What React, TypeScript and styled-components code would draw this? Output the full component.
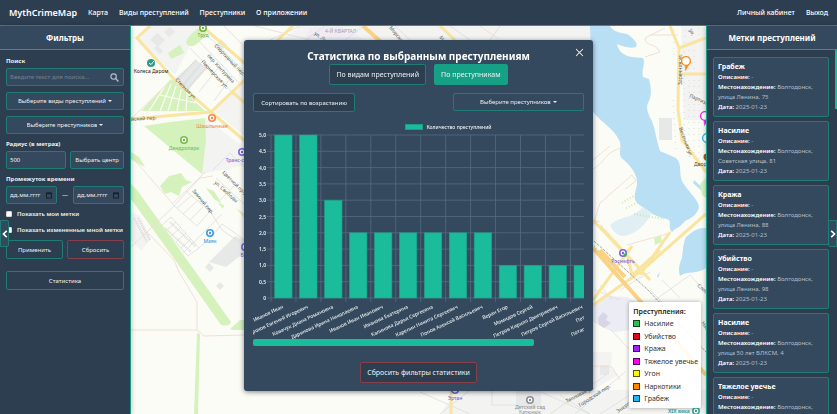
import React from "react";
import styled, { createGlobalStyle, css } from "styled-components";

const color = {
  dark: "#2c3e50",
  panel: "#34495e",
  line: "#1f7d76",
  teal: "#1abc9c",
  tealDeep: "#16a085",
  red: "#874049",
  text: "#ecf0f1",
  muted: "#b4bfc8",
};

const GlobalStyle = createGlobalStyle`
  * { box-sizing: border-box; }
  html, body, #root { height: 100%; margin: 0; }
  body {
    font-family: "Noto Sans", "Open Sans", sans-serif;
    font-size: 6px;
    color: ${color.text};
    background: ${color.dark};
    overflow: hidden;
  }
  button, input, select { font: inherit; color: inherit; margin: 0; }
`;

const Page = styled.div`
  height: 100vh;
  display: grid;
  grid-template-rows: 26px minmax(0, 1fr);
`;

const NavBar = styled.nav`
  display: flex;
  align-items: center;
  gap: 11px;
  padding: 0 9px;
  background: ${color.dark};
  border-bottom: 1px solid ${color.tealDeep};
`;

const Brand = styled.a`
  font-size: 9px;
  font-weight: 600;
  color: #fff;
  text-decoration: none;
`;

const NavLink = styled.a<{ $push?: boolean }>`
  font-size: 7px;
  font-weight: 500;
  color: #fff;
  text-decoration: none;
  white-space: nowrap;
  margin-left: ${(p) => (p.$push ? "auto" : "0")};
`;

const Main = styled.main`
  position: relative;
  display: grid;
  grid-template-columns: 131px minmax(0, 1fr) 131px;
  min-height: 0;
`;

const Panel = styled.aside<{ $side: "left" | "right" }>`
  position: relative;
  z-index: 1;
  min-height: 0;
  display: flex;
  flex-direction: column;
  background: ${color.dark};
  box-shadow: 0 0 5px rgba(0, 0, 0, 0.3);
  border: 0 solid ${color.tealDeep};
  ${(p) => (p.$side === "left" ? "border-right-width: 1px;" : "border-left-width: 1px;")}
`;

const PanelTitle = styled.h2`
  flex: none;
  margin: 0;
  height: 24px;
  display: flex;
  align-items: center;
  justify-content: center;
  font-size: 8px;
  font-weight: 700;
  color: #fff;
  background: ${color.panel};
  border-bottom: 1px solid ${color.tealDeep};
`;

const PanelToggle = styled.button<{ $side: "left" | "right" }>`
  position: absolute;
  top: 194px;
  ${(p) => p.$side}: 0;
  width: 9px;
  height: 27px;
  padding: 0;
  display: grid;
  place-items: center;
  background: ${color.panel};
  border: 1px solid ${color.line};
  border-radius: ${(p) => (p.$side === "left" ? "0 2px 2px 0" : "2px 0 0 2px")};
`;

const FilterForm = styled.form`
  padding: 7px 6px;
  display: flex;
  flex-direction: column;
`;

const Field = styled.div<{ $tight?: boolean }>`
  display: flex;
  flex-direction: column;
  margin-bottom: ${(p) => (p.$tight ? "2px" : "6px")};
`;

const FieldLabel = styled.label`
  font-weight: 700;
  line-height: 8px;
  margin-bottom: 3px;
`;

const FieldRow = styled.div<{ $gap: number }>`
  display: flex;
  align-items: center;
  gap: ${(p) => p.$gap}px;
`;

const InputBox = styled.div`
  flex: 1 1 auto;
  min-width: 0;
  height: 18px;
  display: flex;
  align-items: center;
  padding: 0 4px 0 3px;
  background: ${color.panel};
  border: 1px solid ${color.line};
  border-radius: 2px;
`;

const TextInput = styled.input<{ $strong?: boolean }>`
  flex: 1 1 0;
  min-width: 0;
  width: 100%;
  padding: 0;
  border: 0;
  outline: 0;
  background: transparent;
  &::placeholder {
    color: ${(p) => (p.$strong ? color.text : "#74808c")};
    opacity: 1;
  }
`;

const outlined = css`
  display: flex;
  align-items: center;
  justify-content: center;
  white-space: nowrap;
  border-radius: 2px;
`;

const Button = styled.button<{
  $tone?: "plain" | "panel" | "danger" | "active";
  $size?: "small" | "large";
  $grow?: boolean;
}>`
  ${outlined}
  ${(p) => (p.$grow ? "flex: 1 1 0; min-width: 0;" : "flex: none;")}
  height: ${(p) => (p.$size === "large" ? "21px" : p.$size === "small" ? "18px" : "19px")};
  padding: 0 ${(p) => (p.$size === "large" ? "6px" : p.$size === "small" ? "4px" : "7px")};
  font-size: ${(p) => (p.$size === "large" ? "7px" : "6px")};
  background: ${(p) =>
    p.$tone === "active" ? color.tealDeep : p.$tone === "panel" ? color.panel : color.dark};
  border: 1px solid
    ${(p) => (p.$tone === "danger" ? color.red : p.$tone === "active" ? color.tealDeep : color.line)};
`;

const SelectBox = styled.label<{ $wide?: boolean }>`
  ${outlined}
  height: 18px;
  gap: 2px;
  ${(p) => (p.$wide ? "width: 131px;" : "margin-bottom: 6px;")}
  background: ${color.panel};
  border: 1px solid ${color.line};
`;

const PlainSelect = styled.select`
  appearance: none;
  field-sizing: content;
  padding: 0;
  border: 0;
  outline: 0;
  background: transparent;
`;

const Caret = styled.span`
  border: 2px solid transparent;
  border-top-color: ${color.text};
  border-bottom-width: 0;
`;

const CheckRow = styled.label`
  display: flex;
  align-items: center;
  gap: 5px;
  height: 16px;
  font-weight: 600;
  white-space: nowrap;
`;

const CheckBox = styled.input`
  appearance: none;
  flex: none;
  width: 6px;
  height: 6px;
  background: #fff;
  border: 1px solid #d6d9dc;
  border-radius: 1px;
  &:checked { background: ${color.teal}; }
`;

const Actions = styled.div<{ $top: number }>`
  display: flex;
  gap: 4px;
  margin-top: ${(p) => p.$top}px;
`;

const CardScroller = styled.div`
  flex: 1 1 0;
  min-height: 0;
  overflow: hidden;
  display: flex;
  align-items: flex-start;
`;

const CardList = styled.ul`
  flex: 1;
  min-width: 0;
  margin: 0;
  padding: 7px 6px;
  list-style: none;
  display: grid;
  gap: 4px;
`;

const VerticalThumb = styled.div`
  width: 2px;
  height: 59px;
  background: ${color.teal};
`;

const Card = styled.li`
  padding: 4px;
  background: ${color.panel};
  border: 1px solid ${color.line};
  border-radius: 2px;
`;

const CardTitle = styled.h3`
  margin: 0;
  font-size: 7px;
  line-height: 10px;
  font-weight: 700;
  color: #fff;
`;

const CardText = styled.p`
  margin: 0;
  line-height: 10px;
  color: ${color.muted};
  b { color: #fff; font-weight: 600; }
`;

const MapArea = styled.section`
  position: relative;
  overflow: hidden;
  background: #fcfcf7;
`;

const MapDrawing = styled.svg`
  position: absolute;
  inset: 0;
  width: 100%;
  height: 100%;
`;

const Legend = styled.div`
  position: absolute;
  right: 5px;
  bottom: 6px;
  min-height: 106px;
  padding: 5px 3px 5px 4px;
  display: flex;
  flex-direction: column;
  justify-content: space-between;
  font-size: 7px;
  line-height: 9px;
  color: #333;
  background: rgba(255, 255, 255, 0.9);
  border-radius: 2px;
  box-shadow: 0 0 4px rgba(0, 0, 0, 0.35);
`;

const LegendTitle = styled.strong`
  color: #222;
  font-weight: 600;
`;

const LegendItem = styled.div`
  display: flex;
  align-items: center;
  gap: 4px;
  white-space: nowrap;
`;

const Swatch = styled.span<{ $fill: string }>`
  width: 7px;
  height: 7px;
  background: ${(p) => p.$fill};
  border: 1px solid rgba(0, 0, 0, 0.65);
`;

const Overlay = styled.div`
  position: fixed;
  inset: 0;
  z-index: 2;
  pointer-events: none;
  display: grid;
  grid-template-columns: 7fr 10fr 7fr;
  align-items: start;
  padding-top: 40px;
`;

const Dialog = styled.section`
  grid-column: 2;
  position: relative;
  min-width: 0;
  pointer-events: auto;
  padding: 9px 9px 8px;
  display: flex;
  flex-direction: column;
  background: ${color.panel};
  border-radius: 3px;
  box-shadow: 0 1px 5px rgba(0, 0, 0, 0.5);
`;

const DialogTitle = styled.h1`
  margin: 0;
  font-size: 10px;
  line-height: 14px;
  font-weight: 700;
  text-align: center;
  color: #fff;
`;

const CloseButton = styled.button`
  position: absolute;
  top: 7px;
  right: 8px;
  width: 10px;
  height: 10px;
  padding: 0;
  border: 0;
  background: transparent;
  display: grid;
  place-items: center;
`;

const Tabs = styled.div`
  display: flex;
  justify-content: center;
  gap: 8px;
  margin-top: 1px;
`;

const Toolbar = styled.div`
  display: flex;
  justify-content: space-between;
  align-items: flex-start;
  margin-top: 8px;
`;

const ChartKey = styled.div`
  display: flex;
  align-items: center;
  justify-content: center;
  gap: 3px;
  height: 8px;
  margin: 11px 0 1px;
  padding-left: 60px;
  font-size: 5px;
  font-weight: 500;
`;

const KeyBox = styled.span`
  width: 18px;
  height: 6px;
  background: ${color.teal};
  border: 1px solid ${color.tealDeep};
`;

const ChartViewport = styled.div`
  overflow: hidden;
  height: 207px;
`;

const HorizontalThumb = styled.div`
  width: 85%;
  height: 7px;
  border-radius: 2px;
  background: ${color.teal};
`;

const DialogFooter = styled.div`
  display: flex;
  justify-content: center;
  margin-top: 16px;
`;

const reports = [
  { kind: "Грабеж", place: "Волгодонск, улица Ленина, 75" },
  { kind: "Насилие", place: "Волгодонск, Советская улица, 81" },
  { kind: "Кража", place: "Волгодонск, улица Ленина, 88" },
  { kind: "Убийство", place: "Волгодонск, улица Ленина, 98" },
  { kind: "Насилие", place: "Волгодонск, улица 50 лет ВЛКСМ, 4" },
  { kind: "Тяжелое увечье", place: "Волгодонск, улица Ленина, 75" },
];

const legend = [
  ["Насилие", "#28c24a"],
  ["Убийство", "#dc0a1e"],
  ["Кража", "#a020f8"],
  ["Тяжелое увечье", "#ff00f0"],
  ["Угон", "#fafa00"],
  ["Наркотики", "#ff8800"],
  ["Грабеж", "#28b4f0"],
];

const offenders: [string, number][] = [
  ["Иванов Иван", 5],
  ["Горохов Евгений Игоревич", 5],
  ["Ковачук Диана Романовна", 3],
  ["Даринова Ирина Николаевна", 2],
  ["Иванов Иван Иванович", 2],
  ["Иванова Екатерина", 2],
  ["Калинова Дарья Сергеевна", 2],
  ["Карепин Никита Сергеевич", 2],
  ["Попов Алексей Васильевич", 2],
  ["Веран Егор", 1],
  ["Момидов Сергей", 1],
  ["Петров Кирилл Дмитриевич", 1],
  ["Петров Сергей Васильевич", 1],
  ["Петрова Анна", 1],
  ["Потапов Максим Петрович", 1],
];

const ticks = ["0", "0,5", "1,0", "1,5", "2,0", "2,5", "3,0", "3,5", "4,0", "4,5", "5,0"];

function OffenderChart() {
  const left = 18;
  const base = 166;
  const unit = 32.6;
  const step = 24.95;
  return (
    <svg width="394" height="207" role="img" aria-label="Количество преступлений">
      <g stroke="#566a80" strokeWidth="1" strokeOpacity="0.8">
        {ticks.map((t, i) => (
          <line key={t} x1={left - 4} x2="394" y1={base - (i * unit) / 2} y2={base - (i * unit) / 2} />
        ))}
        {offenders.map(([name], i) => (
          <line key={name} x1={left + i * step} x2={left + i * step} y1="3" y2={base + 4} />
        ))}
      </g>
      <g fill={color.text} fontSize="5" fontWeight="600" textAnchor="end">
        {ticks.map((t, i) => (
          <text key={t} x={left - 5} y={base - (i * unit) / 2 + 2}>{t}</text>
        ))}
      </g>
      {offenders.map(([name, n], i) => {
        const x = left + i * step + 3.6;
        return (
          <g key={name}>
            <rect x={x} y={base - n * unit} width="17.5" height={n * unit} fill={color.teal} stroke={color.tealDeep} strokeWidth="0.6" />
            <text
              fill={color.text}
              fontSize="5"
              fontWeight="500"
              textAnchor="end"
              transform={`translate(${x + 9} ${base + 10}) rotate(-25)`}
            >
              {name}
            </text>
          </g>
        );
      })}
    </svg>
  );
}

function Poi({ x, y, fill, label, dy = 10 }: { x: number; y: number; fill: string; label: string; dy?: number }) {
  return (
    <g>
      <circle cx={x} cy={y} r="4" fill={fill} />
      <circle cx={x} cy={y} r="1.8" fill="none" stroke="#fff" strokeWidth="1.2" />
      {label && (
        <text x={x} y={y + dy} textAnchor="middle" fontSize="5" fontWeight="500" fill={fill}>{label}</text>
      )}
    </g>
  );
}

function Pin({ x, y, stroke }: { x: number; y: number; stroke: string }) {
  return (
    <g fill="#fff" stroke={stroke} strokeWidth="1.4">
      <path d={`M${x - 1} ${y + 4} L${x - 0.5} ${y + 9.5} L${x + 3} ${y + 3.5} Z`} fill={stroke} strokeWidth="0.5" />
      <circle cx={x} cy={y} r="4.4" />
    </g>
  );
}

const streets: [number, number, number, string][] = [
  [214, 46, 46, "Спортивный пер."],
  [207, 56, 47, "пер. Кантурина"],
  [201, 62, 47, "Пионерская ул."],
  [175, 80, 46, "Степная ул."],
  [222, 173, 45, "Цветной пр-д"],
  [214, 183, 42, "ул. Свободы"],
  [192, 191, 50, "Зимний пер."],
  [131, 121, -4, "йский пер."],
  [314, 34, 38, "ул. Ленина"],
  [389, 28, 50, "Морская ул."],
  [439, 37, 60, "Морская"],
  [689, 30, 65, "ул."],
  [689, 97, 24, "Партизанская"],
  [679, 128, 70, "Весенняя ул."],
  [697, 286, 42, "Слободская"],
  [701, 323, 55, "Набережная"],
  [567, 403, -28, "Тепловая ул."],
  [580, 407, -33, "Городской пер."],
  [618, 413, -35, "Энергетиков"],
];

function CityMap() {
  return (
    <MapDrawing viewBox="131 26 575 388" preserveAspectRatio="xMidYMid slice" aria-label="Карта города">
      <rect x="131" y="26" width="575" height="388" fill="#fcfcf7" />
      {/* built-up quarters */}
      <g fill="#f3f3f1">
        <path d="M148 26H200L175 75 138 40Z" />
        <path d="M205 118L245 148V165L202 174Z" />
        <path d="M214 110L245 82V137Z" />
        <path d="M300 26H600V45H275Z" />
        <path d="M131 212L140 216 151 239 141 251 131 240Z" />
        <path d="M593 352H612L611 368 618 375 593 390Z" />
        <path d="M593 390H706V414H440L460 385Z" />
        <path d="M681 26H706V120H684Z" />
      </g>
      <g fill="#e7e8e8">
        <path d="M196 60L207 68 184 94 171 82Z" />
        <path d="M209 262L235 236 245 240V252L226 267Z" />
        <path d="M205 267l4-4 5 5-4 4zM216 286l4-4 4 4-4 4zM150 40l7-7 8 7-7 7zM164 32l6-5 5 5-6 5zM157 45l6 6-3 3-6-6zM221 39l6 6-7 7-5-6zM516 389h25v18h-25zM600 365l9 0v10h-9zM659 118h13v22h-13z" />
      </g>
      <path d="M593 305l10-9 24 1 13 8 0 24-27 3-20-10z" fill="#ececf4" />
      <path d="M598 318l5-6 5 4-2 4 5 3-7 5-5-3z" fill="#d6d6e6" />
      <path d="M310 28l30-2 25 14h-60z" fill="#f1ecf3" />
      {/* lots and small buildings */}
      <g fill="none" stroke="#dcdddd" strokeWidth="0.8">
        <path d="M172 204L186 191 210 211 197 226ZM177 208L191 196M183 214L197 201M190 220L203 207" />
        <path d="M161 226L171 217 199 248 188 256ZM166 231l10-9M171 236l10-9M176 242l10-9M181 248l10-9" />
        <path d="M186 191L205 172M210 211L222 230 245 246M199 248L212 236 222 224 245 240" />
        <path d="M183 253L222 214M216 178L245 205M213 170L230 153 245 168M220 200L236 184" />
        <path d="M205 33L245 72M196 38L240 84M190 48L232 92M218 68L199 92M232 76L214 101M224 26L243 45" />
        <path d="M255 26L310 40M270 40L300 26M305 40L325 26M345 40L362 27M395 26L410 40M450 26L470 40M490 40L500 26" />
        <path d="M420 392L470 414M470 390L440 414M492 391V405H516M541 392L590 414M550 414L606 375M575 414L625 372M560 395L590 414M600 414L630 395" />
        <path d="M595 290L620 300M600 285L612 300M640 310L690 402M655 325L700 360M620 290L650 272M655 300L690 275L704 290M650 290l18 18M662 280l18 18" />
        <path d="M594 250L620 270M611 330L630 350" />
      </g>
      <g fill="none" stroke="#d9d9d9" strokeWidth="2" strokeDasharray="1 1">
        <path d="M201 64L179 90M196 60L174 84M206 68L184 93" />
        <path d="M134 218L147 242M138 218L150 240M165 228L191 252M170 222L196 247" />
      </g>
      <g fill="none" stroke="#dedede" strokeWidth="1.2" strokeDasharray="1 5">
        <path d="M684 52V140M689 50V150M694 50V160M699 80V160M685 30V44M692 28V40M699 28V38M674 30V60M673 100L676 150" />
      </g>
      {/* water */}
      <g fill="#b9dff5">
        <path d="M590 26H610C613 31 619 33 627 34C632 37 639 43 636 47C630 49 622 46 617 44C618 51 624 56 632 57L643 58C646 63 641 70 643 77L649 79C651 87 652 94 649 101C645 107 648 114 652 121C656 132 656 139 660 151L676 158C683 164 678 175 683 183C690 193 699 201 699 207C698 214 690 219 685 221C680 228 675 228 672 232C667 228 673 221 667 219C656 217 651 213 641 206C633 201 634 196 636 189C640 179 633 168 624 160C616 155 623 147 619 140C614 129 602 123 593 112Z" />
        <path d="M706 228C696 227 690 234 686 237C683 243 683 250 682 258C679 264 678 271 680 276C688 270 697 275 706 268Z" />
        <path d="M694 180l13 12-1 3-13-12zM660 272l-2 6-1-2z" />
      </g>
      <path d="M610 225C620 216 632 219 643 207L652 213C647 222 640 231 628 235C620 238 614 234 610 225Z" fill="#e0eff4" />
      {/* greenery */}
      <g fill="#d5f2bd">
        <path d="M144 126L170 122 205 118 206 140 202 174Z" />
        <path d="M171 79L205 111H141Z" />
        <path d="M131 184L137 190 207 288 231 322C230 326 225 326 221 325L178 264 131 199Z" />
        <path d="M230 329L240 320H250V330H232Z" />
        <path d="M197 333l3 1-2 80h-4z" />
        <path d="M168 53l12-8 4 8-13 6z" />
        <path d="M186 42C189 34 199 26 205 27C209 31 206 37 199 42C193 48 187 47 186 42Z" />
        <path d="M131 152l8 5 6 10-8-4-6-4zM160 186l9-10 12-3 5 7 6 2-10 5-3 9-8-4-6 2zM206 188l8 3 8 13-8-5zM218 203l6 2-1 4zM236 208l9 6v5zM146 218h9l-3 8z" />
        <path d="M654 238l7-2 1 6-7 3zM700 184l6-6v20l-4-3z" />
      </g>
      <g fill="none" stroke="#c7eaa8" strokeWidth="2" strokeDasharray="1 2">
        <path d="M622 203L634 196M626 208L639 202M634 214L664 219M594 246L605 257" />
      </g>
      <g stroke="#fcfcf7" strokeWidth="1.2">
        <path d="M171 84L160 111M176 86L168 111M181 90L177 111M187 95L186 111M165 86L149 111" />
        <path d="M160 95L196 103" />
      </g>
      {/* footpaths */}
      <g fill="none" stroke="#efdccf" strokeWidth="0.9">
        <path d="M131 330H144L197 330 204 336 245 335M197 330V302L179 272 174 260 147 232 131 247M147 232L175 205 200 178 213 176M131 156L172 203M131 119L165 86" />
        <path d="M593 169C606 162 604 152 622 148M593 160L610 146M593 225L600 203 632 175 636 181 625 189M594 220L600 222M645 57L660 52C655 42 645 47 645 38L665 28M650 35H678M627 245L670 233M593 366L612 367 620 380M480 26L497 38" />
      </g>
      {/* main roads */}
      <g fill="none" stroke="#f9e4a0" strokeWidth="3">
        <path d="M150 26L137 38 173 78 211 112 245 141M131 119L211 112 250 75M202 26L250 68M267 50L293 26M440 26L455 40M231 91L245 103" />
        <path d="M451 390V414M670 26L679 48 678 110 682 140 706 172M679 48L706 38M679 74H706" />
        <path d="M593 220L628 257M593 305L640 272 706 214M628 257L632 275 660 250M593 300L632 246M600 226L650 280M640 275L670 232" />
      </g>
      <path d="M593 248L706 375M363 26L380 41M600 250L625 277" fill="none" stroke="#fbd284" strokeWidth="4" />
      <path d="M594 241L648 290 706 352" fill="none" stroke="#a7a7a7" strokeWidth="1" strokeDasharray="3 1" />
      {/* street names */}
      <g fontSize="5" fill="#555">
        {streets.map(([x, y, a, name]) => (
          <text key={name} transform={`translate(${x} ${y}) rotate(${a})`}>{name}</text>
        ))}
        <text transform="translate(682 85) rotate(-90)">Заречная ул.</text>
        <text x="325" y="33" fill="#9d9db8">4-Й КВАРТАЛ</text>
        <text x="694" y="166" fill="#444">Дворец</text>
      </g>
      {/* places */}
      <Poi x={203} y={28} fill="#76b04a" label="Труд" dy={9} />
      <Poi x={212} y={118} fill="#f28a52" label="Шашлычная" />
      <Poi x={184} y={140} fill="#79bd4c" label="Дендропарк" />
      <Poi x={242} y={152} fill="#7b68dd" label="Транс-сервис" />
      <Poi x={210} y={233} fill="#3c9bea" label="Маяк" />
      <Poi x={245} y={247} fill="#7b68dd" label="ВГК" />
      <Poi x={623} y={253} fill="#7b68dd" label="Роснефть" />
      <circle cx="625" cy="255" r="1.6" fill="#22c04b" />
      <Poi x={455} y={390} fill="#7b68dd" label="Эртан" />
      <Poi x={530} y={400} fill="#8d9096" label="Детский сад" dy={9} />
      <text x="530" y="414" textAnchor="middle" fontSize="5" fill="#8d9096">Катюнюк</text>
      <circle cx="151" cy="63" r="4" fill="#2d9b85" />
      <path d="M149 63l2 1.6 3-3.6" fill="none" stroke="#fff" strokeWidth="1" />
      <text x="151" y="73" textAnchor="middle" fontSize="5" fill="#222">Колеса Даром</text>
      <Poi x={696} y={411} fill="#3aa99a" label="" />
      <text x="668" y="413" fontSize="5" fontWeight="700" fill="#3aa99a">XIX века</text>
      <Pin x={686} y={61} stroke="#ff8a14" />
      <Pin x={705} y={116} stroke="#f020f0" />
      <Pin x={707} y={138} stroke="#28b4f0" />
      <circle cx="707" cy="157" r="3.5" fill="#b8501e" />
    </MapDrawing>
  );
}

function CalendarIcon() {
  return (
    <svg width="6" height="7" viewBox="0 0 6 7" fill="none" stroke="#15202b" aria-hidden="true">
      <rect x="0.5" y="1" width="5" height="5" />
      <path d="M0.5 1.5H5.5" strokeWidth="1.4" />
    </svg>
  );
}

function Chevron({ flip }: { flip?: boolean }) {
  return (
    <svg width="6" height="8" viewBox="0 0 6 8" fill="none" stroke="#fff" strokeWidth="1.6" aria-hidden="true">
      <path d={flip ? "M1.2 0.8L4.6 4 1.2 7.2" : "M4.8 0.8L1.4 4 4.8 7.2"} />
    </svg>
  );
}

function Dropdown({ label, wide }: { label: string; wide?: boolean }) {
  return (
    <SelectBox $wide={wide}>
      <PlainSelect aria-label={label}>
        <option>{label}</option>
      </PlainSelect>
      <Caret />
    </SelectBox>
  );
}

function DateField({ label, id }: { label: string; id?: string }) {
  return (
    <InputBox>
      <TextInput id={id} $strong aria-label={label} placeholder="дд.мм.гггг" />
      <CalendarIcon />
    </InputBox>
  );
}

export default function App() {
  return (
    <Page>
      <GlobalStyle />
      <NavBar>
        <Brand href="#">MythCrimeMap</Brand>
        <NavLink href="#map">Карта</NavLink>
        <NavLink href="#kinds">Виды преступлений</NavLink>
        <NavLink href="#offenders">Преступники</NavLink>
        <NavLink href="#about">О приложении</NavLink>
        <NavLink href="#account" $push>Личный кабинет</NavLink>
        <NavLink href="#logout">Выход</NavLink>
      </NavBar>
      <Main>
        <Panel $side="left">
          <PanelTitle>Фильтры</PanelTitle>
          <FilterForm>
            <Field>
              <FieldLabel htmlFor="search">Поиск</FieldLabel>
              <InputBox>
                <TextInput id="search" placeholder="Введите текст для поиска..." />
                <svg width="9" height="9" viewBox="0 0 9 9" fill="none" stroke="#b4bfc8" aria-hidden="true">
                  <circle cx="3.6" cy="3.6" r="2.7" strokeWidth="1.1" />
                  <path d="M5.6 5.6L8.4 8.4" strokeWidth="1.4" />
                </svg>
              </InputBox>
            </Field>
            <Dropdown label="Выберите виды преступлений" />
            <Dropdown label="Выберите преступников" />
            <Field>
              <FieldLabel htmlFor="radius">Радиус (в метрах)</FieldLabel>
              <FieldRow $gap={4}>
                <InputBox>
                  <TextInput id="radius" defaultValue="500" />
                </InputBox>
                <Button type="button" $tone="panel" $size="small">Выбрать центр</Button>
              </FieldRow>
            </Field>
            <Field $tight>
              <FieldLabel htmlFor="from">Промежуток времени</FieldLabel>
              <FieldRow $gap={5}>
                <DateField id="from" label="Начало" />
                <span>—</span>
                <DateField label="Конец" />
              </FieldRow>
            </Field>
            <CheckRow>
              <CheckBox type="checkbox" />
              Показать мои метки
            </CheckRow>
            <CheckRow>
              <CheckBox type="checkbox" />
              Показать измененные мной метки
            </CheckRow>
            <Actions $top={2}>
              <Button type="button" $grow>Применить</Button>
              <Button type="button" $grow $tone="danger">Сбросить</Button>
            </Actions>
            <Actions $top={12}>
              <Button type="button" $grow>Статистика</Button>
            </Actions>
          </FilterForm>
          <PanelToggle $side="left" aria-label="Свернуть фильтры">
            <Chevron />
          </PanelToggle>
        </Panel>

        <MapArea>
          <CityMap />
          <Legend>
            <LegendTitle>Преступления:</LegendTitle>
            {legend.map(([name, fill]) => (
              <LegendItem key={name}>
                <Swatch $fill={fill} />
                {name}
              </LegendItem>
            ))}
          </Legend>
        </MapArea>

        <Panel $side="right">
          <PanelTitle>Метки преступлений</PanelTitle>
          <CardScroller>
            <CardList>
              {reports.map((r, i) => (
                <Card key={i}>
                  <CardTitle>{r.kind}</CardTitle>
                  <CardText><b>Описание:</b> -</CardText>
                  <CardText><b>Местонахождение:</b> {r.place}</CardText>
                  <CardText><b>Дата:</b> 2025-01-23</CardText>
                </Card>
              ))}
            </CardList>
            <VerticalThumb />
          </CardScroller>
          <PanelToggle $side="right" aria-label="Свернуть метки">
            <Chevron flip />
          </PanelToggle>
        </Panel>
      </Main>

      <Overlay>
        <Dialog role="dialog" aria-labelledby="stats-title">
          <DialogTitle id="stats-title">Статистика по выбранным преступлениям</DialogTitle>
          <CloseButton aria-label="Закрыть">
            <svg width="9" height="9" viewBox="0 0 9 9" fill="none" aria-hidden="true">
              <path d="M1 1L8 8M8 1L1 8" stroke="#1d2730" strokeWidth="2.4" />
              <path d="M1 1L8 8M8 1L1 8" stroke="#d5dadd" strokeWidth="1.1" />
            </svg>
          </CloseButton>
          <Tabs>
            <Button $size="large">По видам преступлений</Button>
            <Button $size="large" $tone="active">По преступникам</Button>
          </Tabs>
          <Toolbar>
            <Button>Сортировать по возрастанию</Button>
            <Dropdown wide label="Выберите преступников" />
          </Toolbar>
          <ChartKey>
            <KeyBox />
            Количество преступлений
          </ChartKey>
          <ChartViewport>
            <OffenderChart />
          </ChartViewport>
          <HorizontalThumb />
          <DialogFooter>
            <Button $size="large" $tone="danger">Сбросить фильтры статистики</Button>
          </DialogFooter>
        </Dialog>
      </Overlay>
    </Page>
  );
}
